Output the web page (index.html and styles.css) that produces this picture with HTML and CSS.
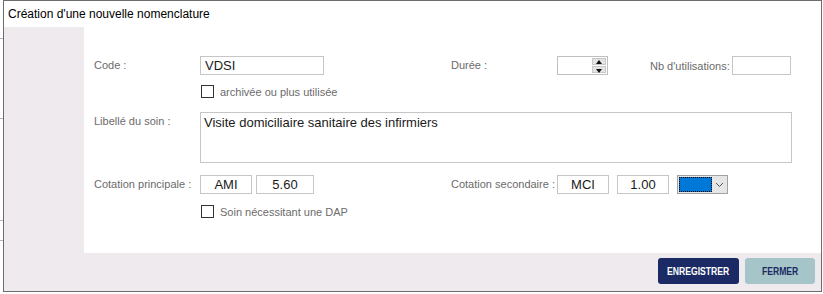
FILE: index.html
```html
<!DOCTYPE html>
<html lang="fr">
<head>
    <meta charset="UTF-8">
    <title>Création d'une nouvelle nomenclature</title>
    <link rel="stylesheet" href="styles.css">
</head>
<body>
    <div class="backdrop">
        <span class="mark m1"></span>
        <span class="mark m2"></span>
        <span class="mark m3"></span>
        <span class="mark m4"></span>
    </div>

    <div class="dialog">
        <div class="title-bar">Création d'une nouvelle nomenclature</div>

        <div class="dialog-body">
            <div class="panel">
                <!-- ligne code / durée / utilisations -->
                <div class="row">
                    <label class="lbl">Code :</label>
                    <div class="col-a">
                        <input type="text" class="field code" value="VDSI">
                    </div>
                    <label class="lbl">Durée :</label>
                    <div class="spin">
                        <span class="spin-btns">
                            <span class="spin-up"></span>
                            <span class="spin-down"></span>
                        </span>
                    </div>
                    <label class="lbl-nb">Nb d'utilisations:</label>
                    <input type="text" class="field nb">
                </div>

                <div class="row check-row first-check">
                    <span class="box"></span>
                    <span class="check-label">archivée ou plus utilisée</span>
                </div>

                <div class="row libelle">
                    <label class="lbl">Libellé du soin :</label>
                    <div class="area">Visite domiciliaire sanitaire des infirmiers</div>
                </div>

                <div class="row cotations">
                    <label class="lbl">Cotation principale :</label>
                    <div class="col-a">
                        <input type="text" class="field small centered" value="AMI">
                        <input type="text" class="field coef centered" value="5.60">
                    </div>
                    <label class="lbl">Cotation secondaire :</label>
                    <input type="text" class="field small centered" value="MCI">
                    <input type="text" class="field small centered gap" value="1.00">
                    <div class="select">
                        <span class="select-value"></span>
                        <span class="select-arrow">
                            <svg width="9" height="6" viewBox="0 0 9 6"><path d="M1 1 L4.5 4.5 L8 1" fill="none" stroke="#555" stroke-width="1"/></svg>
                        </span>
                    </div>
                </div>

                <div class="row check-row second-check">
                    <span class="box"></span>
                    <span class="check-label">Soin nécessitant une DAP</span>
                </div>
            </div>

            <div class="footer">
                <button class="btn primary"><span>ENREGISTRER</span></button>
                <button class="btn secondary"><span>FERMER</span></button>
            </div>
        </div>
    </div>
</body>
</html>
```

FILE: styles.css
```css
* {
    box-sizing: border-box;
    margin: 0;
    padding: 0;
}

body {
    width: 823px;
    height: 294px;
    overflow: hidden;
    background: #ffffff;
    font-family: "Liberation Sans", Arial, sans-serif;
    position: relative;
}

/* page derrière la fenêtre */
.backdrop .mark {
    position: absolute;
    left: 0;
    width: 3px;
    height: 1px;
    background: #b5b5b5;
}

.m1 { top: 38px; }
.m2 { top: 118px; }
.m3 { top: 220px; height: 3px; background: #c0c0c0; }
.m4 { top: 240px; height: 3px; background: #c0c0c0; }

.dialog {
    position: relative;
    margin-left: 3px;
    width: 819px;
    height: 292px;
    border: 1px solid #6c6c6c;
    background: #efeaed;
    display: flex;
    flex-direction: column;
}

.title-bar {
    height: 26px;
    background: #ffffff;
    padding: 5px 0 0 4px;
    font-size: 12px;
    color: #000;
    line-height: 16px;
}

.dialog-body {
    flex: 1;
    display: flex;
    flex-direction: column;
}

.panel {
    margin-left: 80px;
    height: 226px;
    background: #ffffff;
    padding: 29px 0 0 10px;
}

.row {
    display: flex;
    align-items: center;
}

.lbl {
    width: 106px;
    flex-shrink: 0;
    white-space: nowrap;
    font-size: 11px;
    color: #6b6b6b;
    line-height: 19px;
}

.col-a {
    width: 251px;
    flex-shrink: 0;
    display: flex;
    gap: 4px;
}

.field {
    height: 19px;
    flex-shrink: 0;
    border: 1px solid #c6c6c6;
    font-family: "Liberation Sans", Arial, sans-serif;
    font-size: 13px;
    color: #1a1a1a;
    padding: 0 4px;
    background: #fff;
}

.code {
    width: 124px;
}

.centered {
    text-align: center;
}

.small {
    width: 52px;
}

.coef {
    width: 58px;
}

.gap {
    margin-left: 8px;
}

.spin {
    width: 51px;
    height: 19px;
    flex-shrink: 0;
    border: 1px solid #c0c0c0;
    display: flex;
    justify-content: flex-end;
    padding: 1px 1px 1px 0;
}

.spin-btns {
    width: 14px;
    display: flex;
    flex-direction: column;
    gap: 1px;
}

.spin-btns span {
    flex: 1;
    background: #e4e4e4;
    border: 1px solid #c8c8c8;
    position: relative;
}

.spin-up::after,
.spin-down::after {
    content: "";
    position: absolute;
    left: 3px;
    border-left: 3px solid transparent;
    border-right: 3px solid transparent;
}

.spin-up::after {
    top: 1px;
    border-bottom: 4px solid #111;
}

.spin-down::after {
    top: 2px;
    border-top: 4px solid #111;
}

.lbl-nb {
    margin-left: 42px;
    width: 82px;
    flex-shrink: 0;
    white-space: nowrap;
    font-size: 11px;
    color: #6b6b6b;
}

.nb {
    width: 59px;
}

.check-row {
    margin-left: 107px;
}

.first-check {
    margin-top: 10px;
}

.second-check {
    margin-top: 11px;
}

.box {
    width: 13px;
    height: 13px;
    border: 1px solid #333;
    background: #fff;
}

.check-label {
    margin-left: 6px;
    font-size: 11px;
    color: #6b6b6b;
}

.libelle {
    margin-top: 14px;
    align-items: flex-start;
}

.area {
    width: 592px;
    height: 51px;
    border: 1px solid #c6c6c6;
    font-size: 13px;
    color: #1a1a1a;
    padding: 2px 3px;
    line-height: 16px;
}

.cotations {
    margin-top: 12px;
}

.select {
    margin-left: 8px;
    width: 51px;
    height: 19px;
    flex-shrink: 0;
    border: 1px solid #a2a2a2;
    display: flex;
    background: #e6e6e6;
}

.select-value {
    flex: 1;
    background: #0078d7;
    border: 1px dotted #000;
    margin: 1px 0 1px 1px;
}

.select-arrow {
    width: 15px;
    display: flex;
    align-items: center;
    justify-content: center;
}

.footer {
    flex: 1;
    display: flex;
    justify-content: flex-end;
    align-items: center;
    gap: 6px;
    padding: 0 6px 2px 0;
}

.btn {
    height: 26px;
    border: none;
    border-radius: 3px;
    font-family: "Liberation Sans", sans-serif;
    font-weight: bold;
    font-size: 10px;
    cursor: pointer;
    overflow: hidden;
}

.btn span {
    display: inline-block;
    transform: scaleX(0.86);
}

.primary {
    width: 81px;
    background: #1b2a64;
    color: #ffffff;
}

.secondary {
    width: 70px;
    background: #a6c5c8;
    color: #1b2a64;
}
```
